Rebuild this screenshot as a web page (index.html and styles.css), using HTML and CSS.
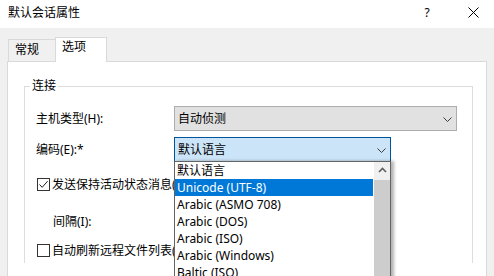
FILE: index.html
```html
<!DOCTYPE html>
<html lang="zh-CN">
<head>
<meta charset="utf-8">
<title>默认会话属性</title>
<link rel="stylesheet" href="styles.css">
</head>
<body>
<div class="dialog">
  <div class="titlebar">
    <span class="title">默认会话属性</span>
    <span class="help">?</span>
    <span class="close">
      <svg width="11" height="11" viewBox="0 0 11 11"><path d="M0.5 0.5 L10.5 10.5 M10.5 0.5 L0.5 10.5" stroke="#000" stroke-width="1" fill="none"/></svg>
    </span>
  </div>
  <div class="content">
    <div class="tabs">
      <div class="tab">常规</div>
      <div class="tab active">选项</div>
    </div>
    <div class="panel">
      <fieldset class="group">
        <legend>连接</legend>
        <div class="row row-first">
          <span class="label">主机类型(H):</span>
          <div class="combo combo-disabled">
            <span class="combo-text">自动侦测</span>
            <svg class="chev" width="9" height="5" viewBox="0 0 9 5"><path d="M0.5 0.5 L4.5 4.5 L8.5 0.5" stroke="#3c3c3c" fill="none"/></svg>
          </div>
        </div>
        <div class="row row-second">
          <span class="label">编码(E):*</span>
          <div class="combo combo-focus">
            <span class="combo-text">默认语言</span>
            <svg class="chev" width="9" height="5" viewBox="0 0 9 5"><path d="M0.5 0.5 L4.5 4.5 L8.5 0.5" stroke="#3c3c3c" fill="none"/></svg>
            <div class="dropdown">
              <ul class="options">
                <li>默认语言</li>
                <li class="selected">Unicode (UTF-8)</li>
                <li>Arabic (ASMO 708)</li>
                <li>Arabic (DOS)</li>
                <li>Arabic (ISO)</li>
                <li>Arabic (Windows)</li>
                <li>Baltic (ISO)</li>
              </ul>
              <div class="scrollbar">
                <div class="scroll-btn">
                  <svg width="9" height="6" viewBox="0 0 9 6"><path d="M1 5 L4.5 1.5 L8 5" stroke="#606060" stroke-width="1.6" fill="none"/></svg>
                </div>
                <div class="scroll-thumb"></div>
              </div>
            </div>
          </div>
        </div>
        <div class="row check-row check-first">
          <span class="box">
            <svg width="11" height="11" viewBox="0 0 11 11"><path d="M1.5 5.5 L4.2 8.3 L9.6 2.2" stroke="#222" stroke-width="1" fill="none"/></svg>
          </span>
          <span class="check-text">发送保持活动状态消息(V)</span>
        </div>
        <div class="row interval-row">
          <span class="interval-label">间隔(I):</span>
        </div>
        <div class="row check-row check-second">
          <span class="box"></span>
          <span class="check-text">自动刷新远程文件列表(R)</span>
        </div>
      </fieldset>
    </div>
  </div>
</div>
</body>
</html>
```

FILE: styles.css
```css
* { box-sizing: border-box; }

html, body {
  margin: 0;
  padding: 0;
}

body {
  width: 494px;
  height: 276px;
  overflow: hidden;
  background: #f0f0f0;
  font-family: "Noto Sans", "Noto Sans CJK SC", sans-serif;
  font-size: 12px;
  color: #000;
}

.dialog {
  display: flex;
  flex-direction: column;
  height: 276px;
  overflow: hidden;
}

.titlebar {
  height: 28px;
  background: #fff;
  display: flex;
  align-items: center;
  padding: 0 0 3px 8px;
  line-height: 16px;
  flex-shrink: 0;
}

.title {
  flex: 1;
}

.help {
  width: 10px;
  margin-right: 36px;
  font-size: 12px;
  text-align: center;
}

.close {
  display: flex;
  width: 11px;
  margin-right: 15px;
}

.content {
  padding: 9px 7px 0 7px;
  flex: 1;
  display: flex;
  flex-direction: column;
  min-height: 0;
}

.tabs {
  display: flex;
  align-items: flex-end;
  height: 24px;
  padding-left: 1px;
  flex-shrink: 0;
}

.tab {
  height: 22px;
  width: 48px;
  border: 1px solid #d9d9d9;
  border-bottom: none;
  background: #f0f0f0;
  padding: 2px 0 0 6px;
  line-height: 16px;
}

.tab.active {
  height: 25px;
  width: 52px;
  margin-left: -1px;
  margin-bottom: -1px;
  background: #fff;
  padding-top: 1px;
  position: relative;
  z-index: 1;
}

.panel {
  flex: 1;
  min-height: 0;
  background: #fff;
  border: 1px solid #d9d9d9;
  border-bottom: none;
  padding: 16px 13px 0 16px;
}

.group {
  margin: 0;
  border: 1px solid #dcdcdc;
  border-bottom: none;
  padding: 0 0 0 5px;
  min-width: 0;
}

.group legend {
  padding: 0 2px;
  line-height: 16px;
}

.row {
  display: flex;
  align-items: center;
  padding-left: 6px;
  height: 25px;
}

.row-first {
  margin-top: 12px;
}

.row-second {
  margin-top: 6px;
}

.label {
  width: 138px;
  line-height: 16px;
}

.combo {
  position: relative;
  height: 25px;
  display: flex;
  align-items: center;
  padding-left: 3px;
  border: 1px solid #adadad;
  line-height: 16px;
}

.combo-disabled {
  width: 283px;
  background: #e1e1e1;
  color: #000;
}

.combo-focus {
  width: 217px;
  background: #cce4f7;
  border-color: #005499;
}

.combo-text {
  flex: 1;
}

.chev {
  margin-right: 4px;
  margin-top: 1px;
}

.dropdown {
  position: absolute;
  left: -1px;
  top: 100%;
  width: 217px;
  height: 122px;
  background: #fff;
  border: 1px solid #646464;
  border-bottom: none;
  display: flex;
  box-shadow: 3px 0 3px rgba(0, 0, 0, 0.3);
  z-index: 5;
}

.options {
  list-style: none;
  margin: 0;
  padding: 0;
  flex: 1;
  overflow: hidden;
}

.options li {
  height: 17px;
  line-height: 17px;
  padding-left: 2px;
  white-space: nowrap;
}

.options li.selected {
  background: #0078d7;
  color: #fff;
}

.scrollbar {
  width: 16px;
  margin-left: 1px;
  display: flex;
  flex-direction: column;
}

.scroll-btn {
  height: 18px;
  background: #f0f0f0;
  display: flex;
  align-items: center;
  justify-content: center;
  padding-bottom: 2px;
}

.scroll-thumb {
  flex: 1;
  background: #cdcdcd;
}

.check-row {
  padding-left: 7px;
}

.check-first {
  margin-top: 10px;
}

.interval-row {
  margin-top: 12px;
  padding-left: 23px;
}

.check-second {
  margin-top: 4px;
}

.box {
  width: 13px;
  height: 13px;
  border: 1px solid #333;
  background: #fff;
  display: flex;
  align-items: center;
  justify-content: center;
  margin-right: 2px;
  flex-shrink: 0;
}

.check-text, .interval-label {
  line-height: 16px;
  white-space: nowrap;
}
```
